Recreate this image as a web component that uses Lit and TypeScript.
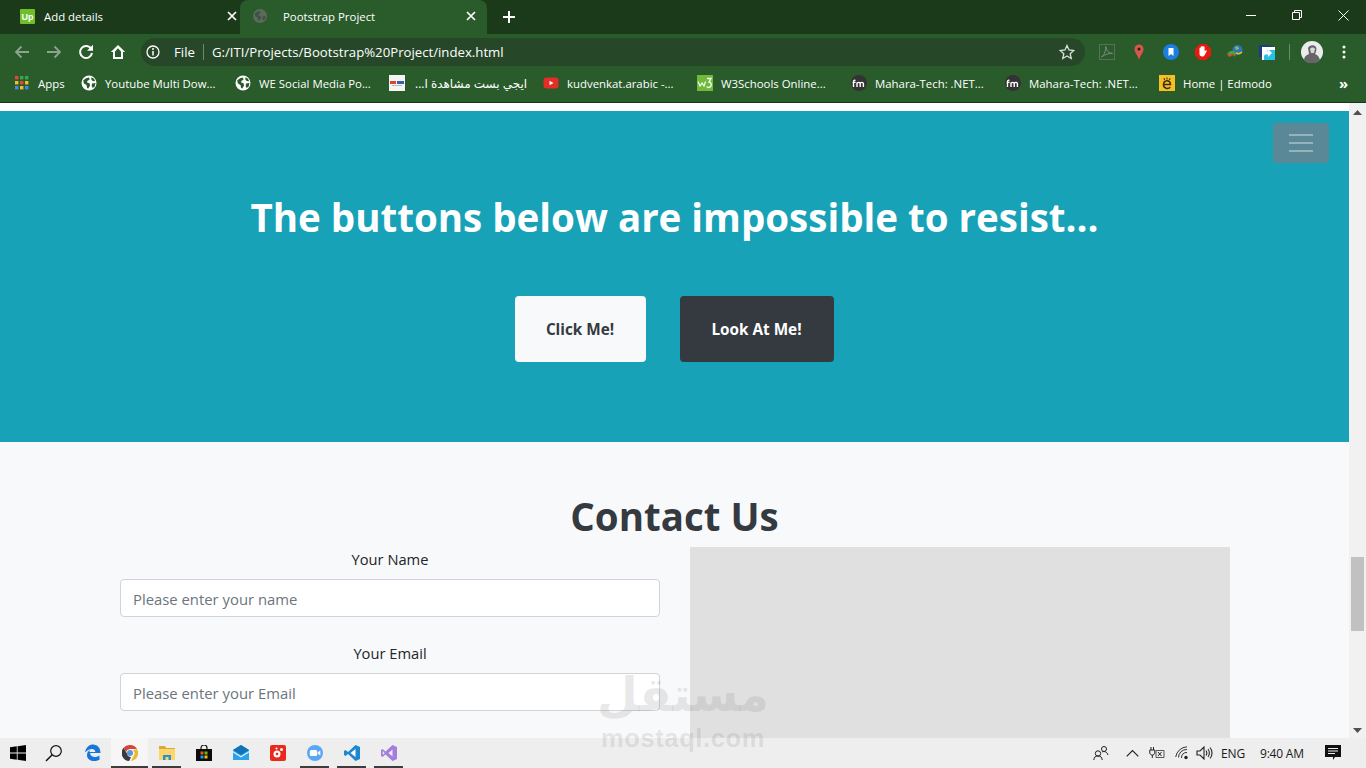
import { LitElement, html, css, svg } from "lit";
import { customElement } from "lit/decorators.js";

const globe = svg`<svg width="16" height="16" viewBox="0 0 16 16"><circle cx="8" cy="8" r="7.5" fill="#fff"/><path d="M2.2 5.5 5 3.2l3-.6.6 2-2.3 1.3-.2 1.6 2.4.8.6 2.3-1.8 3-1.2-.5-.6-3-2.6-1.5zM10.5 2.2l2.5 1.5 1.2 2.5-2.6-.3-1.4-1.6zM11 8.6l3.5-.6-.8 3.4-2 1.6-1-2z" fill="#295b2b"/></svg>`;
const mf = svg`<svg width="16" height="16" viewBox="0 0 16 16"><circle cx="8" cy="8" r="8" fill="#333"/><path d="M2.5 12V6.6c0-1.3 1.1-1.7 2-1.1M1.6 7.4h3M6 12V7.4M6 8.6c.3-1.6 3-1.7 3.2 0V12M9.2 8.6c.3-1.6 3-1.7 3.2 0V12" fill="none" stroke="#fff" stroke-width="1.4"/></svg>`;
const icons: Record<string, unknown> = {
  apps: svg`<svg width="14" height="14" viewBox="0 0 14 14">${[0, 5, 10].flatMap((x, i) => [0, 5, 10].map((y, j) => svg`<rect x=${x} y=${y} width="3.4" height="3.4" fill=${["#e8453c", "#f9bb2d", "#4285f4", "#34a853", "#e8453c", "#f9bb2d", "#34a853", "#f9bb2d", "#4285f4"][i * 3 + j]} />`))}</svg>`,
  globe,
  mf,
  ar: svg`<svg width="16" height="16" viewBox="0 0 16 16"><rect width="16" height="16" fill="#f4f4f4"/><rect x="1" y="6" width="6" height="3" fill="#d9482b"/><rect x="8" y="6" width="7" height="3" fill="#3a5fa8"/><rect x="3" y="10" width="10" height="1" fill="#bbb"/></svg>`,
  yt: svg`<svg width="16" height="16" viewBox="0 0 16 16"><rect x="0.5" y="2.5" width="15" height="11" rx="3" fill="#e52d27"/><path d="M6.5 5.7 10.5 8l-4 2.3z" fill="#fff"/></svg>`,
  w3: svg`<svg width="16" height="16" viewBox="0 0 16 16"><rect width="16" height="16" fill="#6fba3b"/><path d="M1 6.5 3 11l2-3 2 3 1.600-4.500" fill="none" stroke="#fff" stroke-width="1.100"/><path d="M10 3.500h4l-2 3.600c3 0 3 5.400-.4 5.400-.9 0-1.500-.3-1.900-.8" fill="none" stroke="#fff" stroke-width="1.300"/></svg>`,
  ed: svg`<svg width="16" height="16" viewBox="0 0 16 16"><rect width="16" height="16" fill="#f5c023"/><path d="M4.500 10c0-5.500 7-5.500 7-.6H4.600M11.300 12.200c-2 2-6.800 1.500-6.800-2.400" fill="none" stroke="#3b2a10" stroke-width="1.500"/><path d="M5 3.300 5.600 5M8 2.500V4.500M11 3.300 10.400 5" stroke="#3b2a10" stroke-width="1.100"/></svg>`,
};

const bookmarks = [
  ["apps", "Apps"],
  ["globe", "Youtube Multi Dow..."],
  ["globe", "WE Social Media Po..."],
  ["ar", "ايجي بست مشاهدة ا..."],
  ["yt", "kudvenkat.arabic -..."],
  ["w3", "W3Schools Online..."],
  ["mf", "Mahara-Tech: .NET..."],
  ["mf", "Mahara-Tech: .NET..."],
  ["ed", "Home | Edmodo"],
];

const extIcons = [
  svg`<svg width="16" height="16" viewBox="0 0 16 16"><rect x=".5" y=".5" width="15" height="15" fill="none" stroke="#5c6e5d"/><path d="M2.500 13c2.500-1.500 4-5 4.300-10.500.3 4 2.500 6.500 6.700 7-3.500-.3-7 .6-11 3.500z" fill="none" stroke="#7c8a7d"/></svg>`,
  svg`<svg width="16" height="18" viewBox="0 0 16 18"><path d="M8 17C7 12 3.500 10 3.500 6a4.500 4.500 0 0 1 9 0C12.500 10 9 12 8 17z" fill="#d8564a"/><circle cx="8" cy="6" r="1.500" fill="#222"/></svg>`,
  svg`<svg width="16" height="16" viewBox="0 0 16 16"><circle cx="8" cy="8" r="8" fill="#1a7fe0"/><path d="M5.500 4h5v8L8 10l-2.500 2z" fill="#fff"/></svg>`,
  svg`<svg width="16" height="16" viewBox="0 0 16 16"><path d="M4.700 0h6.600L16 4.700v6.600L11.300 16H4.700L0 11.300V4.700z" fill="#e8190f"/><path d="M4.500 8V4.200c0-.9 1.200-.9 1.200 0V3c0-.9 1.300-.9 1.300 0v-.4c0-.9 1.300-.9 1.300 0V3c0-.9 1.300-.9 1.300 0v4.500l.9-1c.7-.7 1.600 0 1.200.7l-2 3.800c-.4.800-1.200 1.500-2.200 1.500H7.200C5.500 12.500 4.500 11.500 4.500 10z" fill="#fff"/></svg>`,
  svg`<svg width="17" height="16" viewBox="0 0 17 16"><circle cx="10.500" cy="6" r="5" fill="#2f74c0"/><path d="M8 3c2-1 4 0 4 2l-3 1z" fill="#8bc34a"/><path d="M1 9c2-3 6-3 8 0l-1 4c-1-2-3-2-5-1z" fill="#39a845"/><path d="M1 9c0 2 1 3 2 3 1-2 3-2 5-1" fill="none" stroke="#e34b2a" stroke-width="1.500"/><path d="M9 9c2 1 4 1 6-1" fill="none" stroke="#f3c01c" stroke-width="1.500"/></svg>`,
  svg`<svg width="16" height="16" viewBox="0 0 16 16"><path d="M0 1h11l2 2v3H3v7H0z" fill="#1c3f7c"/><rect x="3" y="3" width="13" height="13" fill="#fff"/><path d="M9 6h7v10H5v-4z" fill="#29c0e8"/><path d="M4 7.500h5V5l4 4-4 4v-2.500H4z" fill="#fff"/></svg>`,
];

const taskIcons = [
  svg`<svg width="16" height="16" viewBox="0 0 16 16" style="margin-left:-2px"><path d="M0 2.300 6.800 1.300v6.300H0zM7.600 1.200 16 0v7.600H7.600zM0 8.400h6.800v6.300L0 13.700zM7.600 8.400H16V16l-8.400-1.200z" fill="#000"/></svg>`,
  svg`<svg width="18" height="18" viewBox="0 0 18 18" style="margin-left:-3px"><circle cx="11" cy="7" r="5.300" fill="none" stroke="#111" stroke-width="1.200"/><path d="M7.200 10.800 1 17" stroke="#111" stroke-width="1.500"/></svg>`,
  svg`<svg width="17" height="18" viewBox="0 0 17 18"><path d="M1 8.500C2 3 5.500.5 9 .5c4.500 0 7.500 3.500 7.500 8.500H6c.3 4.500 6 5 9.500 2.500v4.200C10.500 18.500 3 17 3 11c0-2 1-4 3.500-5.500-.8 1-1.100 1.800-1.200 2.500h6c0-3.500-5.500-4.500-10.300.5z" fill="#1577d9"/></svg>`,
  svg`<svg width="16" height="16" viewBox="0 0 16 16"><path d="M8 0a8 8 0 0 1 7 4H8a4 4 0 0 0-3.800 2.700L1.600 2.800A8 8 0 0 1 8 0z" fill="#d9443a"/><path d="M15 4a8 8 0 0 1-6 12l2.800-5.500A4 4 0 0 0 11 5.200z" fill="#e9b92f"/><path d="M1.600 2.800l3.500 6A4 4 0 0 0 9 12l-1.800 4A8 8 0 0 1 1.600 2.800z" fill="#3a3a3a"/><circle cx="8" cy="8" r="3" fill="#5a95d8"/></svg>`,
  svg`<svg width="16" height="16" viewBox="0 0 16 16"><path d="M0 1h6l1 2h9v3H0z" fill="#d8a93b"/><path d="M0 4h16v11H0z" fill="#fcd669"/><path d="M4 10h8v5H9.500v-3h-3v3H4z" fill="#2b8fd6"/></svg>`,
  svg`<svg width="16" height="16" viewBox="0 0 16 16"><path d="M5 5V3a3 3 0 0 1 6 0v2" fill="none" stroke="#111" stroke-width="1.200"/><rect y="4" width="16" height="12" fill="#0b0b0b"/><rect x="4.500" y="6.500" width="3" height="3" fill="#f25022"/><rect x="8.500" y="6.500" width="3" height="3" fill="#7fba00"/><rect x="4.500" y="10.500" width="3" height="3" fill="#00a4ef"/><rect x="8.500" y="10.500" width="3" height="3" fill="#ffb900"/></svg>`,
  svg`<svg width="16" height="16" viewBox="0 0 16 16"><path d="M0 5 8 0l8 5v10H0z" fill="#2aa3e8"/><path d="M0 5l8 5 8-5-8-5z" fill="#1273b8"/><path d="M0 6l8 5 8-5v1.500L8 12.500 0 7.500z" fill="#d8f0fc"/></svg>`,
  svg`<svg width="16" height="16" viewBox="0 0 16 16"><rect width="16" height="16" rx="2" fill="#e8291c"/><circle cx="7" cy="9" r="3.500" fill="#fff"/><circle cx="7" cy="9" r="1.300" fill="#e8291c"/><circle cx="11.500" cy="4.500" r="1.500" fill="#fff"/><circle cx="6.500" cy="3.500" r="1" fill="#fff"/></svg>`,
  svg`<svg width="16" height="16" viewBox="0 0 16 16"><circle cx="8" cy="8" r="8" fill="#5aa8f5"/><rect x="2.800" y="5" width="7.400" height="6" rx="1.500" fill="#fff"/><path d="M10.800 7.300 13.300 5.500v5l-2.500-1.800z" fill="#fff"/></svg>`,
  svg`<svg width="16" height="16" viewBox="0 0 16 16"><path d="M11.500 0 16 2v12l-4.500 2L4 9l-2.500 2L0 10V6l1.500-1L4 7z" fill="#1f86d0"/><path d="M11.500 4 6.500 8l5 4z" fill="#fff"/></svg>`,
  svg`<svg width="16" height="16" viewBox="0 0 16 16"><path d="M11.500 0 16 2v12l-4.500 2L4.500 9.500 1.500 12 0 11V5l1.500-1 3 2.500z" fill="#a27fdc"/><path d="M11.500 4.500 7.500 8l4 3.500z" fill="#eee8fa"/><path d="M1.700 6v4l2-2z" fill="#eee8fa"/></svg>`,
];

@customElement("app-root")
export class AppRoot extends LitElement {
  static styles = css`
    :host { display: block; width: 1366px; height: 768px; overflow: hidden; position: relative; font-family: "Open Sans", "Noto Sans", "DejaVu Sans", sans-serif; color: #212529; }
    .shell { display: flex; flex-direction: column; height: 768px; }

    .tabs { height: 34px; background: #1b3a1a; display: flex; color: #fff; font-size: 11.400px; flex: none; }
    .tab { width: 240px; display: flex; align-items: center; padding: 0 0 2px 20px; box-sizing: border-box; }
    .tab .fav { width: 15px; height: 15px; display: flex; }
    .tab .title { margin-left: 9px; flex: 1; }
    .tab .x { width: 16px; height: 16px; display: flex; align-items: center; justify-content: center; }
    .tab.active { width: 247px; background: #295b2b; border-radius: 8px 8px 0 0; padding-left: 13px; }
    .tab.active .title { margin-left: 16px; }
    .tab.active .x { margin-right: 8px; }
    .plus { width: 44px; display: flex; align-items: center; justify-content: center; }
    .winbtns { margin-left: auto; display: flex; }
    .winbtns div { width: 46px; height: 30px; display: flex; align-items: center; justify-content: center; }

    .toolbar { height: 32px; background: #295b2b; display: flex; align-items: flex-end; padding-left: 6px; flex: none; box-sizing: border-box; }
    .tb { width: 32px; height: 28px; display: flex; align-items: center; justify-content: center; flex: none; }
    .addr { margin-left: 7px; width: 944px; height: 28px; background: #264829; border-radius: 14px; display: flex; align-items: center; color: #fff; font-size: 13.200px; flex: none; box-sizing: border-box; }
    .addr .info { margin-left: 5px; width: 16px; display: flex; }
    .addr .file { margin-left: 12px; }
    .addr .sep { width: 1px; height: 16px; background: #6d8a6e; margin: 0 8px 0 8px; }
    .addr .url { flex: 1; }
    .addr .star { margin-right: 10px; display: flex; }
    .addr-gap { width: 6px; flex: none; }
    .tsep { width: 1px; height: 16px; background: #6d8a6e; margin: 0 6px; align-self: center; position: relative; top: 2px; flex: none; }
    .avatar { width: 32px; }

    .bookmarks { background: #295b2b; border-bottom: 1px solid #17361a; display: flex; align-items: center; padding: 0 0 2px 15px; color: #fff; font-size: 11.400px; flex: none; box-sizing: border-box; height: 37px; }
    .bm { width: 154px; display: flex; align-items: center; flex: none; white-space: nowrap; }
    .bm.apps { width: 66px; }
    .bm .ic { width: 16px; height: 16px; display: flex; align-items: center; flex: none; margin-right: 8px; }
    .bm.apps .ic { width: 14px; margin-right: 9px; }
    .bm.wide .ic { margin-right: 10px; }
    .bm.wide .lbl { font-size: 12px; }
    .more { margin-left: 26px; font-size: 15px; font-weight: 700; line-height: 1; }

    .viewport { flex: 1; min-height: 0; display: flex; }
    .page { flex: 1; min-width: 0; background: #fff; padding-top: 8px; overflow: hidden; }
    .hero { height: 331px; background: #17a2b8; color: #fff; display: flex; flex-direction: column; box-sizing: border-box; padding-top: 12px; }
    .toggler-row { display: flex; justify-content: flex-end; padding-right: 20px; }
    .toggler { width: 56px; height: 40px; background: #5a8896; border-radius: 4px; display: flex; flex-direction: column; align-items: center; justify-content: center; gap: 6px; }
    .toggler i { display: block; width: 24px; height: 2px; background: #94b3bd; }
    .hero h1 { margin: 30px 0 0; font-size: 38.500px; line-height: 48px; font-weight: 700; text-align: center; }
    .btns { display: flex; justify-content: center; gap: 34px; margin-top: 55px; margin-left: -1px; }
    .btn { height: 66px; display: flex; align-items: center; justify-content: center; border-radius: 4px; font-size: 15.300px; font-weight: 700; box-sizing: border-box; padding-bottom: 1px; }
    .btn.l { width: 131px; background: #f8f9fa; color: #343a40; }
    .btn.d { width: 154px; background: #343a40; color: #fff; }

    .contact { background: #f8f9fa; height: 296px; padding-top: 49px; box-sizing: border-box; overflow: hidden; }
    .contact h2 { margin: 0; font-size: 38.500px; line-height: 50px; font-weight: 700; text-align: center; color: #343a40; }
    .cols { display: grid; grid-template-columns: 540px 540px; gap: 30px; margin: 6px 0 0 120px; }
    .field { display: flex; flex-direction: column; align-items: stretch; }
    .field + .field { margin-top: 24px; }
    .field label { text-align: center; font-size: 14.700px; line-height: 24px; margin: 0 0 8px; }
    .field .input { height: 38px; box-sizing: border-box; border: 1px solid #ced4da; border-radius: 4px; background: #fff; padding: 1px 12px 0; display: flex; align-items: center; color: #6c757d; font-size: 14.850px; }
    .map { background: #e0e0e0; height: 400px; }

    .scroll { width: 17px; background: #f1f1f1; flex: none; display: flex; flex-direction: column; align-items: center; justify-content: space-between; padding: 7px 0 5px; box-sizing: border-box; position: relative; }
    .thumb { position: absolute; left: 2px; top: 454px; width: 13px; height: 74px; background: #c1c1c1; }

    .taskbar { height: 30px; background: #eeeeee; display: flex; align-items: stretch; flex: none; font-size: 12px; color: #1a1a1a; position: relative; }
    .task { width: 37px; display: flex; align-items: center; justify-content: center; flex: none; box-sizing: border-box; position: relative; }
    .task.on::after { content: ""; position: absolute; bottom: 0; left: 4px; right: 4px; height: 2px; background: #3c3c3c; }
    .task.active { background: #f6f6f6; }
    .task.active::after { left: 0; right: 0; }
    .tray { margin-left: auto; display: flex; align-items: center; }
    .tray > * { flex: none; }
    .tray .ti { display: flex; align-items: center; justify-content: center; }

    .mark { position: absolute; left: 600px; top: 664px; width: 166px; pointer-events: none; text-align: center; color: rgba(120, 120, 120, 0.17); display: flex; flex-direction: column; align-items: center; }
    .mark .ar { font-family: "DejaVu Sans", sans-serif; font-weight: 700; font-size: 47px; line-height: 62px; white-space: nowrap; }
    .mark .en { font-family: "Liberation Sans", sans-serif; font-weight: 700; font-size: 25.500px; line-height: 24px; letter-spacing: 0.6px; white-space: nowrap; }
  `;

  render() {
    return html`
      <div class="shell">
        <div class="tabs">
          <div class="tab">
            <span class="fav"><svg width="15" height="15" viewBox="0 0 15 15"><rect width="15" height="15" rx="1" fill="#6fbf2a"/><text x="7.500" y="10.500" font-size="9" font-weight="700" fill="#fff" text-anchor="middle" font-family="Liberation Sans">Up</text></svg></span>
            <span class="title">Add details</span>
            <span class="x">${this.x("#fff")}</span>
          </div>
          <div class="tab active">
            <span class="fav" style="width:14px"><svg width="14" height="14" viewBox="0 0 16 16"><circle cx="8" cy="8" r="8" fill="#5a6b5c"/><path d="M2 5.500 5 3l3-.6.6 2-2.300 1.300-.2 1.600 2.400.8.6 2.300-1.800 3-1.200-.5-.6-3-2.600-1.500zM11 8.600l3.500-.6-.8 3.400-2 1.600-1-2z" fill="#3f4f42"/></svg></span>
            <span class="title">Pootstrap Project</span>
            <span class="x">${this.x("#fff")}</span>
          </div>
          <div class="plus"><svg width="12" height="12" viewBox="0 0 12 12"><path d="M6 0v12M0 6h12" stroke="#fff" stroke-width="2"/></svg></div>
          <div class="winbtns">
            <div><svg width="10" height="10" viewBox="0 0 10 10"><path d="M0 5.500h10" stroke="#fff"/></svg></div>
            <div><svg width="10" height="10" viewBox="0 0 10 10"><path d="M.5 2.500h7v7h-7zM2.500 2.500v-2h7v7h-2" fill="none" stroke="#fff"/></svg></div>
            <div><svg width="11" height="11" viewBox="0 0 11 11"><path d="M.5.500l10 10M10.500.500l-10 10" stroke="#fff"/></svg></div>
          </div>
        </div>

        <div class="toolbar">
          <div class="tb"><svg width="16" height="14" viewBox="0 0 16 14"><path d="M15 7H2M7.500 1.500 2 7l5.500 5.500" fill="none" stroke="#8da38e" stroke-width="1.800"/></svg></div>
          <div class="tb"><svg width="16" height="14" viewBox="0 0 16 14"><path d="M1 7h13M8.500 1.500 14 7l-5.500 5.500" fill="none" stroke="#8da38e" stroke-width="1.800"/></svg></div>
          <div class="tb"><svg width="16" height="16" viewBox="0 0 16 16"><path d="M13.300 5A6 6 0 1 0 14 9" fill="none" stroke="#fff" stroke-width="2"/><path d="M15 .8v6H9z" fill="#fff"/></svg></div>
          <div class="tb"><svg width="16" height="16" viewBox="0 0 16 16"><path d="M8 1 .8 8H3v7h10V8h2.200zM5 13V7.500L8 4.200l3 3.300V13z" fill="#fff"/></svg></div>
          <div class="addr">
            <span class="info"><svg width="14" height="14" viewBox="0 0 14 14"><circle cx="7" cy="7" r="6" fill="none" stroke="#fff" stroke-width="1.300"/><path d="M7 6v4.500" stroke="#fff" stroke-width="1.500"/><circle cx="7" cy="4" r="1" fill="#fff"/></svg></span>
            <span class="file">File</span>
            <span class="sep"></span>
            <span class="url">G:/ITI/Projects/Bootstrap%20Project/index.html</span>
            <span class="star"><svg width="16" height="16" viewBox="0 0 16 16"><path d="M8 1.500 10 6l4.800.5-3.600 3.200 1 4.800L8 12l-4.200 2.500 1-4.800L1.200 6.500 6 6z" fill="none" stroke="#ddd" stroke-width="1.300"/></svg></span>
          </div>
          <div class="addr-gap"></div>
          ${extIcons.map((i) => html`<div class="tb">${i}</div>`)}
          <div class="tsep"></div>
          <div class="tb avatar"><svg width="22" height="22" viewBox="0 0 22 22"><circle cx="11" cy="11" r="11" fill="#ececec"/><path d="M3 19c0-3 2-5 5-6l-1-6c1-3 6-4 8-1 1 2 0 5-1 7 3 1 4 3 5 6a11 11 0 0 1-16 0z" fill="#666"/><path d="M9 8c1-2 4-2 5 0l-1 4h-3z" fill="#d8d8d8"/></svg></div>
          <div class="tb"><svg width="4" height="14" viewBox="0 0 4 14"><circle cx="2" cy="2" r="1.500" fill="#fff"/><circle cx="2" cy="7" r="1.500" fill="#fff"/><circle cx="2" cy="12" r="1.500" fill="#fff"/></svg></div>
        </div>

        <div class="bookmarks">
          ${bookmarks.map(([i, t], n) => html`<div class="bm ${n === 0 ? "apps" : ""} ${n === 3 ? "wide" : ""}"><span class="ic">${icons[i]}</span><span class="lbl" dir=${n === 3 ? "rtl" : "ltr"}>${t}</span></div>`)}
          <span class="more">»</span>
        </div>

        <div class="viewport">
          <div class="page">
            <section class="hero">
              <div class="toggler-row"><div class="toggler"><i></i><i></i><i></i></div></div>
              <h1>The buttons below are impossible to resist...</h1>
              <div class="btns"><div class="btn l">Click Me!</div><div class="btn d">Look At Me!</div></div>
            </section>
            <section class="contact">
              <h2>Contact Us</h2>
              <div class="cols">
                <div>
                  <div class="field"><label>Your Name</label><div class="input">Please enter your name</div></div>
                  <div class="field"><label>Your Email</label><div class="input">Please enter your Email</div></div>
                </div>
                <div class="map"></div>
              </div>
            </section>
          </div>
          <div class="scroll">
            <svg width="9" height="5" viewBox="0 0 9 5"><path d="M4.500 0 9 5H0z" fill="#505050"/></svg>
            <div class="thumb"></div>
            <svg width="9" height="5" viewBox="0 0 9 5"><path d="M4.500 5 9 0H0z" fill="#505050"/></svg>
          </div>
        </div>

        <div class="taskbar">
          ${taskIcons.map((i, n) => html`<div class="task ${[3, 4, 8, 9, 10].includes(n) ? "on" : ""} ${n === 3 ? "active" : ""}">${i}</div>`)}
          <div class="tray">
            <span class="ti" style="width:18px"><svg width="16" height="16" viewBox="0 0 16 16"><circle cx="5" cy="8.500" r="2.700" fill="none" stroke="#222"/><path d="M.8 15c.3-3 1.600-4 4.200-4s3.900 1 4.200 4" fill="none" stroke="#222"/><circle cx="11" cy="4" r="2.500" fill="none" stroke="#222"/><path d="M9 7c2-1 5-.5 6 3" fill="none" stroke="#222"/></svg></span>
            <span class="ti" style="width:14px;margin-left:15px"><svg width="13" height="8" viewBox="0 0 13 8"><path d="M.7 7.300 6.500 1.500l5.800 5.800" fill="none" stroke="#222" stroke-width="1.200"/></svg></span>
            <span class="ti" style="width:17px;margin-left:9px"><svg width="16" height="12" viewBox="0 0 16 12"><path d="M2 0v3M4.500 0v3M.8 3h5v3c0 1-1 2-2.500 2S.8 7 .8 6zM3.300 8v3" fill="none" stroke="#222"/><path d="M7 3.500h8v7H7z" fill="none" stroke="#555"/><path d="M9 5l3.500 4M12.500 5 9 9" stroke="#222"/></svg></span>
            <span class="ti" style="width:16px;margin-left:9px"><svg width="15" height="14" viewBox="0 0 15 14"><path d="M.7 11A12 12 0 0 1 12 .8M3.500 11.500A8 8 0 0 1 12 3.500M6.500 12A5 5 0 0 1 12 6.500" fill="none" stroke="#333"/><circle cx="11" cy="11.500" r="1.700" fill="#222"/></svg></span>
            <span class="ti" style="width:17px;margin-left:6px"><svg width="17" height="14" viewBox="0 0 17 14"><path d="M1 5h3l4-4v12L4 9H1zM10 4.500c1 1.500 1 3.500 0 5M12 3c1.800 2 1.800 6 0 8M14 1.500c2.700 3 2.700 8 0 11" fill="none" stroke="#222" stroke-width="1.100"/></svg></span>
            <span style="margin-left:8px;width:26px;letter-spacing:-.1px">ENG</span>
            <span style="margin-left:13px;width:52px;white-space:nowrap;letter-spacing:-.2px">9:40 AM</span>
            <span class="ti" style="width:16px;margin:0 25px 0 13px"><svg width="16" height="16" viewBox="0 0 16 16"><path d="M0 0h16v12h-6l-2 3v-3H0z" fill="#111"/><path d="M3 3.500h10M3 6h10M3 8.500h7" stroke="#eee"/></svg></span>
          </div>
        </div>
      </div>
      <div class="mark"><span class="ar" lang="ar" dir="rtl">مستقل</span><span class="en">mostaql.com</span></div>
    `;
  }

  private x(c: string) {
    return svg`<svg width="10" height="10" viewBox="0 0 10 10"><path d="M1 1l8 8M9 1l-8 8" stroke=${c} stroke-width="1.700"/></svg>`;
  }
}
